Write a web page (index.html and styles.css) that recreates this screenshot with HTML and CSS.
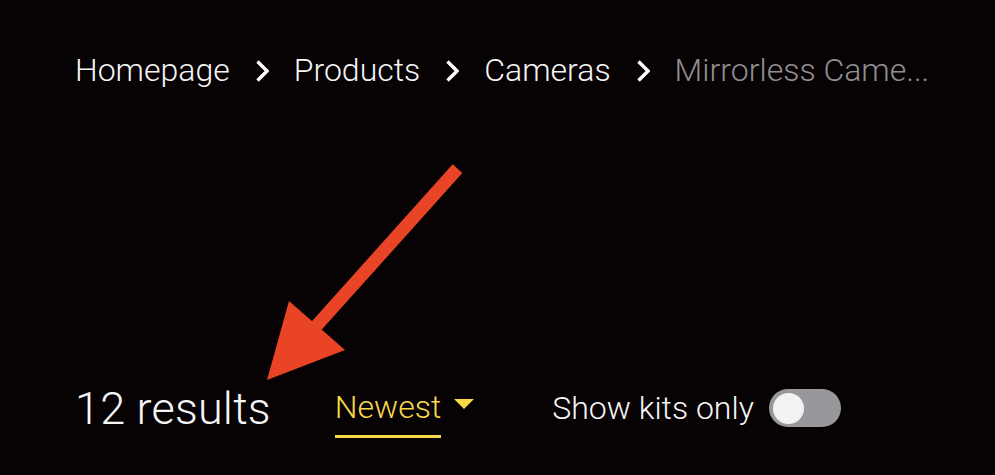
FILE: index.html
```html
<!DOCTYPE html>
<html lang="en">
<head>
<meta charset="utf-8">
<title>Mirrorless Cameras</title>
<link rel="stylesheet" href="styles.css">
</head>
<body>
<div class="page">
  <nav class="crumbs">
    <a class="crumb" href="#">Homepage</a>
    <svg class="chev" viewBox="0 0 13 22" width="13" height="22"><polyline points="1.5,1.5 11,11 1.5,20.5"/></svg>
    <a class="crumb" href="#">Products</a>
    <svg class="chev" viewBox="0 0 13 22" width="13" height="22"><polyline points="1.5,1.5 11,11 1.5,20.5"/></svg>
    <a class="crumb" href="#">Cameras</a>
    <svg class="chev" viewBox="0 0 13 22" width="13" height="22"><polyline points="1.5,1.5 11,11 1.5,20.5"/></svg>
    <span class="crumb current">Mirrorless Came...</span>
  </nav>

  <div class="toolbar">
    <div class="count">12 results</div>
    <button class="sort">
      <span class="sort-label">Newest</span>
      <svg class="caret" viewBox="0 0 20 10" width="20" height="10"><polygon points="0,0 20,0 10,10"/></svg>
    </button>
    <label class="kits">
      <span>Show kits only</span>
      <span class="switch"><span class="thumb"></span></span>
    </label>
  </div>

  <svg class="arrow" viewBox="0 0 995 475" width="995" height="475">
    <line x1="457.5" y1="168.7" x2="310" y2="333" />
    <polygon points="267,380 289,301 345,350" />
  </svg>
</div>
</body>
</html>
```

FILE: styles.css
```css
html, body {
  margin: 0;
  padding: 0;
  background: #070204;
}
body {
  width: 995px;
  height: 475px;
  overflow: hidden;
  font-family: Roboto, "Noto Sans", sans-serif;
  font-weight: 300;
  color: #f5f5f5;
}
.page {
  position: relative;
  width: 995px;
  height: 475px;
  padding: 52px 0 0 75px;
  box-sizing: border-box;
}
.crumbs {
  display: flex;
  align-items: center;
  font-size: 32px;
  line-height: 37px;
}
.crumb {
  color: #f5f5f5;
  text-decoration: none;
  white-space: nowrap;
}
.crumb.current {
  color: #8f8f91;
}
.chev {
  margin: 0 25px 0 26px;
  fill: none;
  stroke: #ffffff;
  stroke-width: 3.4;
  stroke-linejoin: miter;
}
.toolbar {
  display: flex;
  align-items: center;
  margin-top: 289px;
}
.count {
  font-size: 45px;
  line-height: 53px;
  letter-spacing: 0.2px;
}
.sort {
  display: flex;
  align-items: center;
  margin-left: 64px;
  padding: 0;
  background: none;
  border: 0;
  font-family: inherit;
  font-weight: 300;
  color: #f6d84a;
  cursor: pointer;
}
.sort-label {
  font-size: 32px;
  line-height: 37px;
  padding: 11px 0 9px;
  border-bottom: 3px solid #f6d84a;
}
.caret {
  margin-left: 13px;
  margin-top: -8px;
  fill: #f6d84a;
}
.kits {
  display: flex;
  align-items: center;
  margin-left: 78px;
  font-size: 32px;
  line-height: 37px;
}
.switch {
  position: relative;
  display: block;
  width: 72px;
  height: 38px;
  margin-left: 15px;
  border-radius: 19px;
  background: #98989c;
}
.thumb {
  position: absolute;
  left: 4px;
  top: 4px;
  width: 31px;
  height: 31px;
  border-radius: 50%;
  background: #f1f3f1;
}
.arrow {
  position: absolute;
  left: 0;
  top: 0;
  pointer-events: none;
}
.arrow line {
  stroke: #e94426;
  stroke-width: 13;
}
.arrow polygon {
  fill: #e94426;
}
```
